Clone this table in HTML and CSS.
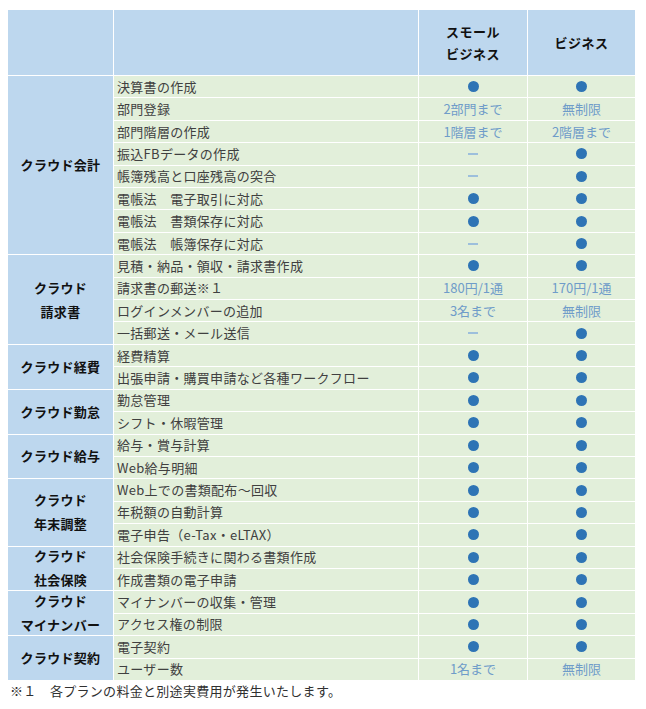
FILE: index.html
```html
<!DOCTYPE html>
<html lang="ja">
<head>
<meta charset="utf-8">
<title>プラン比較</title>
<link rel="stylesheet" href="styles.css">
</head>
<body>
<div class="table">
  <div class="hd"></div>
  <div class="hd"></div>
  <div class="hd plan">スモール<br>ビジネス</div>
  <div class="hd plan">ビジネス</div>

  <div class="cat" style="grid-row: span 8">クラウド会計</div>
  <div class="lbl">決算書の作成</div><div class="val"><i class="dot"></i></div><div class="val"><i class="dot"></i></div>
  <div class="lbl">部門登録</div><div class="val txt">2部門まで</div><div class="val txt">無制限</div>
  <div class="lbl">部門階層の作成</div><div class="val txt">1階層まで</div><div class="val txt">2階層まで</div>
  <div class="lbl">振込FBデータの作成</div><div class="val"><i class="dash"></i></div><div class="val"><i class="dot"></i></div>
  <div class="lbl">帳簿残高と口座残高の突合</div><div class="val"><i class="dash"></i></div><div class="val"><i class="dot"></i></div>
  <div class="lbl">電帳法　電子取引に対応</div><div class="val"><i class="dot"></i></div><div class="val"><i class="dot"></i></div>
  <div class="lbl">電帳法　書類保存に対応</div><div class="val"><i class="dot"></i></div><div class="val"><i class="dot"></i></div>
  <div class="lbl">電帳法　帳簿保存に対応</div><div class="val"><i class="dash"></i></div><div class="val"><i class="dot"></i></div>

  <div class="cat two" style="grid-row: span 4">クラウド<br>請求書</div>
  <div class="lbl">見積・納品・領収・請求書作成</div><div class="val"><i class="dot"></i></div><div class="val"><i class="dot"></i></div>
  <div class="lbl">請求書の郵送※１</div><div class="val txt">180円/1通</div><div class="val txt">170円/1通</div>
  <div class="lbl">ログインメンバーの追加</div><div class="val txt">3名まで</div><div class="val txt">無制限</div>
  <div class="lbl">一括郵送・メール送信</div><div class="val"><i class="dash"></i></div><div class="val"><i class="dot"></i></div>

  <div class="cat" style="grid-row: span 2">クラウド経費</div>
  <div class="lbl">経費精算</div><div class="val"><i class="dot"></i></div><div class="val"><i class="dot"></i></div>
  <div class="lbl">出張申請・購買申請など各種ワークフロー</div><div class="val"><i class="dot"></i></div><div class="val"><i class="dot"></i></div>

  <div class="cat" style="grid-row: span 2">クラウド勤怠</div>
  <div class="lbl">勤怠管理</div><div class="val"><i class="dot"></i></div><div class="val"><i class="dot"></i></div>
  <div class="lbl">シフト・休暇管理</div><div class="val"><i class="dot"></i></div><div class="val"><i class="dot"></i></div>

  <div class="cat" style="grid-row: span 2">クラウド給与</div>
  <div class="lbl">給与・賞与計算</div><div class="val"><i class="dot"></i></div><div class="val"><i class="dot"></i></div>
  <div class="lbl">Web給与明細</div><div class="val"><i class="dot"></i></div><div class="val"><i class="dot"></i></div>

  <div class="cat two" style="grid-row: span 3">クラウド<br>年末調整</div>
  <div class="lbl">Web上での書類配布〜回収</div><div class="val"><i class="dot"></i></div><div class="val"><i class="dot"></i></div>
  <div class="lbl">年税額の自動計算</div><div class="val"><i class="dot"></i></div><div class="val"><i class="dot"></i></div>
  <div class="lbl">電子申告（e-Tax・eLTAX）</div><div class="val"><i class="dot"></i></div><div class="val"><i class="dot"></i></div>

  <div class="cat two" style="grid-row: span 2">クラウド<br>社会保険</div>
  <div class="lbl">社会保険手続きに関わる書類作成</div><div class="val"><i class="dot"></i></div><div class="val"><i class="dot"></i></div>
  <div class="lbl">作成書類の電子申請</div><div class="val"><i class="dot"></i></div><div class="val"><i class="dot"></i></div>

  <div class="cat two" style="grid-row: span 2">クラウド<br>マイナンバー</div>
  <div class="lbl">マイナンバーの収集・管理</div><div class="val"><i class="dot"></i></div><div class="val"><i class="dot"></i></div>
  <div class="lbl">アクセス権の制限</div><div class="val"><i class="dot"></i></div><div class="val"><i class="dot"></i></div>

  <div class="cat" style="grid-row: span 2">クラウド契約</div>
  <div class="lbl">電子契約</div><div class="val"><i class="dot"></i></div><div class="val"><i class="dot"></i></div>
  <div class="lbl">ユーザー数</div><div class="val txt">1名まで</div><div class="val txt">無制限</div>
</div>
<p class="note">※１　各プランの料金と別途実費用が発生いたします。</p>
</body>
</html>
```

FILE: styles.css
```css
html, body {
  margin: 0;
  padding: 0;
  background: #ffffff;
}
body {
  padding: 10px 0 0 8px;
  font-family: "Noto Sans CJK JP", "Noto Sans", sans-serif;
  font-size: 13px;
  color: #404040;
}
.table {
  display: grid;
  grid-template-columns: 105px 304px 108px 107px;
  grid-template-rows: 65px repeat(27, 1fr);
  gap: 1px;
  width: 627px;
  height: 670px;
  background: #ffffff;
}
.hd {
  background: #bdd7ee;
}
.plan {
  display: flex;
  align-items: center;
  justify-content: center;
  text-align: center;
  font-weight: bold;
  color: #111111;
  line-height: 22px;
  letter-spacing: 0.5px;
}
.cat {
  background: #bdd7ee;
  display: flex;
  align-items: center;
  justify-content: center;
  text-align: center;
  font-weight: bold;
  color: #111111;
  line-height: 24px;
  letter-spacing: 0.3px;
}
.lbl {
  background: #e2efda;
  display: flex;
  align-items: center;
  padding-left: 3px;
  line-height: 16px;
  white-space: nowrap;
  letter-spacing: 0.3px;
}
.val {
  background: #e2efda;
  display: flex;
  align-items: center;
  justify-content: center;
  line-height: 16px;
}
.txt {
  color: #6f9cc9;
}
.dot {
  display: block;
  width: 11px;
  height: 11px;
  border-radius: 50%;
  background: #2e74b5;
}
.dash {
  display: block;
  width: 10px;
  height: 2px;
  background: #9dbfdc;
}
.note {
  margin: 2px 0 0 2px;
  line-height: 18px;
  color: #303030;
  letter-spacing: 0.3px;
}
```
